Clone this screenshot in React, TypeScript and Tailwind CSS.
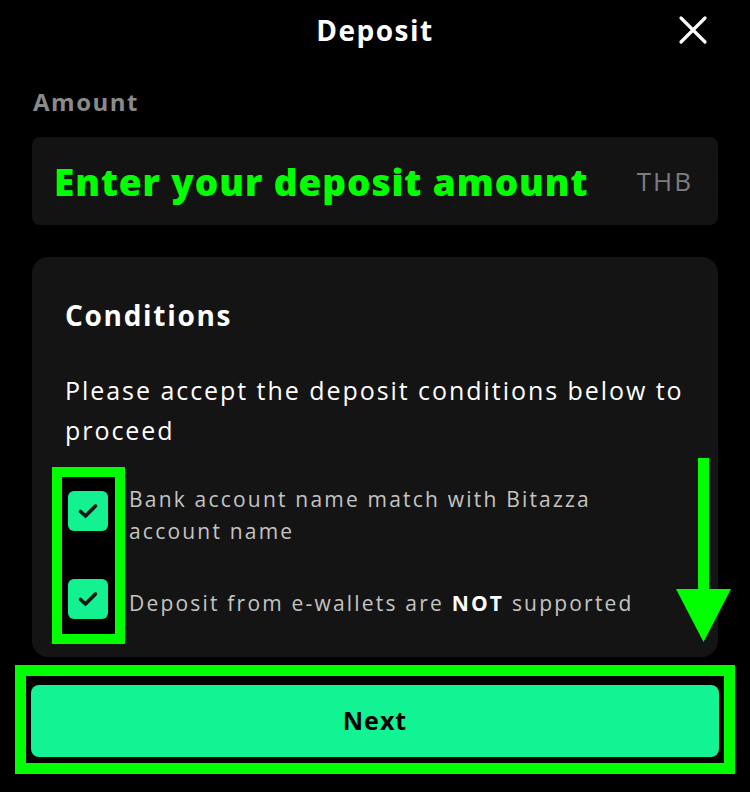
import React from "react";

function Check() {
  return (
    <div className="w-[40px] h-[40px] rounded-[6px] bg-[#13f191] flex items-center justify-center">
      <svg width="22" height="18" viewBox="0 0 22 18" fill="none">
        <path d="M3.5 9.5 L8.5 14 L18.5 4" stroke="#141414" strokeWidth="3.6" strokeLinecap="round" strokeLinejoin="round" />
      </svg>
    </div>
  );
}

export default function App() {
  return (
    <div className="relative w-[750px] h-[792px] bg-black overflow-hidden" style={{ fontFamily: "'Open Sans', 'Noto Sans', sans-serif" }}>
      <div className="grid grid-cols-[1fr_auto_1fr] items-center h-[60px]">
        <div />
        <div className="text-white font-bold text-[28px] leading-none tracking-[1.5px]">Deposit</div>
        <div className="flex justify-end pr-[42px]">
          <svg width="30" height="30" viewBox="0 0 30 30">
            <path d="M3 3 L27 27 M27 3 L3 27" stroke="#fff" strokeWidth="3.2" strokeLinecap="round" />
          </svg>
        </div>
      </div>

      <div className="mt-[28px] ml-[33px] text-[#8a8a8a] font-bold text-[24px] leading-[28px] tracking-[1.5px]">Amount</div>

      <div className="mt-[21px] mx-[32px] h-[88px] rounded-[8px] bg-[#131313] flex items-center justify-between pl-[22px] pr-[25px]">
        <span className="text-[#00ff00] font-extrabold text-[37px] leading-none tracking-[0.9px]">Enter your deposit amount</span>
        <span className="text-[#7c7c7c] text-[26px] leading-none tracking-[2px]">THB</span>
      </div>

      <div className="mt-[32px] mx-[32px] h-[400px] rounded-[16px] bg-[#141414] pt-[40px]">
        <div className="pl-[33px] text-white font-bold text-[28px] leading-[36px] tracking-[1.7px]">Conditions</div>
        <div className="mt-[37px] ml-[33px] w-[630px] text-white text-[25px] leading-[40px] font-normal tracking-[1.95px]">
          Please accept the deposit conditions below to proceed
        </div>
        <div className="mt-[17px] ml-[20px] flex">
          <div className="border-[10px] border-[#00ff00] bg-black w-[73px] h-[177px] pt-[14px] pl-[6px] flex flex-col gap-[48px]">
            <Check />
            <Check />
          </div>
          <div className="ml-[4px] pt-[16px] text-[#c4c4c4] text-[21px] leading-[32px] tracking-[2.2px]">
            <div className="w-[490px]">Bank account name match with Bitazza account name</div>
            <div className="mt-[40px]">
              Deposit from e-wallets are <span className="text-white font-bold">NOT</span> supported
            </div>
          </div>
        </div>
      </div>

      <div className="mt-[8px] mx-[15px] border-[11px] border-[#00ff00] bg-black pt-[9px] pb-[6px] px-[5px]">
        <div className="h-[72px] rounded-[8px] bg-[#12f393] flex items-center justify-center text-black font-bold text-[25px] tracking-[1px]">
          Next
        </div>
      </div>

      <div className="absolute left-[676px] top-[458px] w-[55px] h-[184px] flex flex-col items-center">
        <div className="w-[11px] h-[131px] bg-[#00ff00]" />
        <svg width="55" height="53" viewBox="0 0 55 53">
          <polygon points="0,0 55,0 27.5,53" fill="#00ff00" />
        </svg>
      </div>
    </div>
  );
}
